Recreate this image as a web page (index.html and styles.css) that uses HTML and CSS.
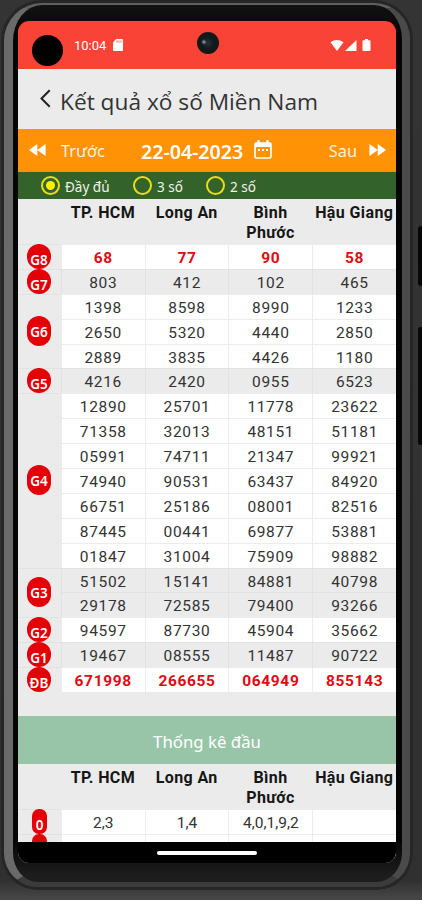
FILE: index.html
```html
<!DOCTYPE html>
<html lang="vi">
<head>
  <meta charset="UTF-8">
  <meta name="viewport" content="width=device-width, initial-scale=1.0">
  <title>Kết quả xổ số Miền Nam</title>
  <link rel="stylesheet" href="styles.css">
</head>
<body>
  <div class="phone">
    <div class="side-button power"></div>
    <div class="side-button volume"></div>
    <div class="bezel">
    <div class="screen">
      <div class="camera"></div>

      <!-- Status bar -->
      <div class="status-bar">
        <span class="hole"></span>
        <span class="clock">10:04</span>
        <svg class="sd" viewBox="0 0 10 12"><path d="M3.2 0H9a1 1 0 0 1 1 1v10a1 1 0 0 1-1 1H1a1 1 0 0 1-1-1V3.4z" fill="#fff"/><path d="M4 1.6v2M6 1.6v2M8 1.6v2" stroke="#f94337" stroke-width=".8"/></svg>
        <svg class="signals" viewBox="0 0 42 14">
          <path d="M0.5 3.2Q7 -1.2 13.5 3.2L7 12z" fill="#fff"/>
          <path d="M26.500 1V12H15z" fill="#fff"/>
          <path d="M33.500 1.200h1.500V0h3v1.200h1.500a1 1 0 0 1 1 1V11a1 1 0 0 1-1 1h-6a1 1 0 0 1-1-1V2.200a1 1 0 0 1 1-1z" fill="#fff"/>
        </svg>
      </div>

      <!-- Title -->
      <div class="title-bar">
        <svg class="back" viewBox="0 0 11 19"><path d="M9.700 1.200L1.500 9.500l8.200 8.300" fill="none" stroke="#222" stroke-width="2"/></svg>
        <h1>Kết quả xổ số Miền Nam</h1>
      </div>

      <!-- Date picker -->
      <div class="date-bar">
        <svg class="arrows" viewBox="0 0 17 12"><path d="M8.300 0v12L0 6zM16.600 0v12L8.300 6z" fill="#fff"/></svg>
        <span class="prev">Trước</span>
        <span class="date">22-04-2023</span>
        <svg class="calendar" viewBox="0 0 18 19"><path d="M4.500 0v3M13.500 0v3" stroke="#fff" stroke-width="2"/><rect x="1" y="3" width="16" height="15" rx="1.500" fill="none" stroke="#fff" stroke-width="1.700"/><path d="M1 3h16v4H1z" fill="#fff"/><path d="M4 10h10" stroke="#fff" stroke-width="1.800" stroke-dasharray="2 2"/></svg>
        <span class="next">Sau</span>
        <svg class="arrows" viewBox="0 0 17 12"><path d="M.4 0v12l8.300-6zM8.700 0v12L17 6z" fill="#fff"/></svg>
      </div>

      <!-- Display mode -->
      <div class="mode-bar">
        <label class="mode mode-full"><i class="radio checked"></i><span>Đầy đủ</span></label>
        <label class="mode mode-three"><i class="radio"></i><span>3 số</span></label>
        <label class="mode mode-two"><i class="radio"></i><span>2 số</span></label>
      </div>

      <!-- Results -->
      <div class="results">
        <div class="provinces"><b></b><b>TP. HCM</b><b>Long An</b><b>Bình<br>Phước</b><b>Hậu Giang</b></div>
        <div class="prize special">
          <div class="label"><span class="badge">G8</span></div>
          <div class="draws"><span>68</span><span>77</span><span>90</span><span>58</span></div>
        </div>
        <div class="prize shaded">
          <div class="label"><span class="badge">G7</span></div>
          <div class="draws"><span>803</span><span>412</span><span>102</span><span>465</span></div>
        </div>
        <div class="prize">
          <div class="label"><span class="badge tall">G6</span></div>
          <div class="draws">
            <span>1398</span><span>8598</span><span>8990</span><span>1233</span>
            <span>2650</span><span>5320</span><span>4440</span><span>2850</span>
            <span>2889</span><span>3835</span><span>4426</span><span>1180</span>
          </div>
        </div>
        <div class="prize shaded">
          <div class="label"><span class="badge">G5</span></div>
          <div class="draws"><span>4216</span><span>2420</span><span>0955</span><span>6523</span></div>
        </div>
        <div class="prize">
          <div class="label"><span class="badge tall">G4</span></div>
          <div class="draws">
            <span>12890</span><span>25701</span><span>11778</span><span>23622</span>
            <span>71358</span><span>32013</span><span>48151</span><span>51181</span>
            <span>05991</span><span>74711</span><span>21347</span><span>99921</span>
            <span>74940</span><span>90531</span><span>63437</span><span>84920</span>
            <span>66751</span><span>25186</span><span>08001</span><span>82516</span>
            <span>87445</span><span>00441</span><span>69877</span><span>53881</span>
            <span>01847</span><span>31004</span><span>75909</span><span>98882</span>
          </div>
        </div>
        <div class="prize shaded">
          <div class="label"><span class="badge tall">G3</span></div>
          <div class="draws">
            <span>51502</span><span>15141</span><span>84881</span><span>40798</span>
            <span>29178</span><span>72585</span><span>79400</span><span>93266</span>
          </div>
        </div>
        <div class="prize">
          <div class="label"><span class="badge">G2</span></div>
          <div class="draws"><span>94597</span><span>87730</span><span>45904</span><span>35662</span></div>
        </div>
        <div class="prize shaded">
          <div class="label"><span class="badge">G1</span></div>
          <div class="draws"><span>19467</span><span>08555</span><span>11487</span><span>90722</span></div>
        </div>
        <div class="prize special">
          <div class="label"><span class="badge">ĐB</span></div>
          <div class="draws"><span>671998</span><span>266655</span><span>064949</span><span>855143</span></div>
        </div>
      </div>

      <!-- Statistics by first digit -->
      <h2 class="stats-title">Thống kê đầu</h2>
      <div class="results stats">
        <div class="provinces"><b></b><b>TP. HCM</b><b>Long An</b><b>Bình<br>Phước</b><b>Hậu Giang</b></div>
        <div class="prize">
          <div class="label"><span class="badge digit">0</span></div>
          <div class="draws"><span>2,3</span><span>1,4</span><span>4,0,1,9,2</span><span></span></div>
        </div>
        <div class="prize">
          <div class="label"><span class="badge digit"></span></div>
          <div class="draws"><span>4</span><span>2,4,2</span><span></span><span>4</span></div>
        </div>
      </div>
      <div class="nav-bar"><span class="handle"></span></div>
    </div>
    </div>
  </div>
</body>
</html>
```
FILE: styles.css
```css
* {
  box-sizing: border-box;
}
body {
  margin: 0;
  background: #343436;
  font-family: Roboto, sans-serif;
  overflow: hidden;
}
.phone {
  position: relative;
  width: 422px;
  height: 900px;
  padding: 3px 12px 10px 4px;
  background: linear-gradient(#343434 0, #303030 880px, #454547 898px);
}
.bezel {
  height: 884px;
  padding: 16px 6px 0 5px;
  border-radius: 38px 36px 34px 34px;
  border-style: solid;
  border-width: 2px 8px 5px 9px;
  border-color: #606060 #4a4a4a #3b3b3b #6a6a6a;
  background: linear-gradient(#121212 0, #050505 30px, #050505 835px, #1d1d1d 870px);
  box-shadow: 0 0 0 3px #262626;
}
.side-button {
  position: absolute;
  right: 0;
  width: 4px;
  background: #080808;
  border-radius: 3px 0 0 3px;
}
.power {
  top: 226px;
  height: 60px;
}
.volume {
  top: 327px;
  height: 118px;
}
.screen {
  position: relative;
  display: flex;
  flex-direction: column;
  width: 378px;
  height: 842px;
  overflow: hidden;
  border-radius: 11px;
  background: #000;
}
.camera {
  position: absolute;
  left: 179px;
  top: 11px;
  width: 22px;
  height: 22px;
  border-radius: 50%;
  background: radial-gradient(circle at 7px 10px, #a5b5b8 0, #333f43 2px, transparent 3px), radial-gradient(circle at 11px 11px, #263238 0, #101a1d 6px, #11181a 11px);
}
.status-bar {
  display: flex;
  align-items: center;
  flex: none;
  height: 48px;
  padding-left: 14px;
  background: #f94337;
  color: #fff;
}
.hole {
  width: 31px;
  height: 31px;
  margin-top: 11px;
  border-radius: 50%;
  background: #000;
}
.clock {
  margin-left: 11px;
  font-size: 13px;
}
.sd {
  width: 10px;
  height: 12px;
  margin-left: 7px;
}
.signals {
  width: 42px;
  height: 14px;
  margin: 1px 24px 0 auto;
}
.title-bar {
  display: flex;
  align-items: center;
  flex: none;
  height: 60px;
  padding-left: 22px;
  background: #ebebeb;
}
.back {
  width: 11px;
  height: 19px;
  margin-bottom: 1px;
}
.title-bar h1 {
  margin: 5px 0 0 9px;
  font: 400 22.700px "Open Sans", sans-serif;
  color: #333;
  white-space: nowrap;
}
.date-bar {
  display: flex;
  align-items: center;
  flex: none;
  height: 43px;
  padding: 0 10px 0 11px;
  background: #ff9205;
  color: #fff;
  font-family: "Noto Sans", sans-serif;
}
.arrows {
  width: 17px;
  height: 12px;
  margin-bottom: 1px;
}
.prev,
.next {
  margin-top: 1px;
  font-size: 16.300px;
  color: #fff3df;
}
.prev {
  width: 80px;
  margin-left: 15px;
}
.date {
  width: 103px;
  margin-top: 2px;
  font-size: 19.600px;
  font-weight: 600;
  white-space: nowrap;
}
.calendar {
  width: 18px;
  height: 19px;
  margin: 0 0 3px 10px;
}
.next {
  margin-left: auto;
  margin-right: 12px;
}
.mode-bar {
  display: flex;
  flex: none;
  height: 27px;
  background: #33632a;
}
.mode {
  display: flex;
  align-items: center;
  color: #f0f3ea;
  font: 13.500px "Noto Sans", sans-serif;
}
.mode-full {
  width: 115px;
  padding-left: 23px;
}
.mode-three {
  width: 73px;
}
.radio {
  width: 19px;
  height: 19px;
  margin-right: 5px;
  padding: 3px;
  border: 2px solid #e8de13;
  border-radius: 50%;
}
.checked::before {
  content: "";
  display: block;
  width: 9px;
  height: 9px;
  border-radius: 50%;
  background: #ffee00;
}
.mode span {
  margin-top: 2px;
}
.results {
  flex: none;
  padding-bottom: 24px;
  background: #ebebeb;
  color: #333;
  font-size: 15.500px;
}
.provinces {
  display: grid;
  grid-template-columns: 43px repeat(4, 83.800px);
  height: 45px;
  padding-top: 4px;
  font-size: 16px;
  line-height: 19.500px;
  text-align: center;
  white-space: nowrap;
  color: #161616;
  letter-spacing: 0.400px;
}
.prize {
  display: flex;
}
.label {
  display: flex;
  align-items: center;
  width: 43px;
  padding-left: 9px;
  box-shadow: inset 0 1px #e2e2e2;
}
.badge {
  width: 24px;
  height: 24.900px;
  padding-top: 4px;
  overflow: hidden;
  border-radius: 12px;
  background: #e30007;
  color: #fff;
  font: 600 13.500px/25px "Noto Sans", sans-serif;
  text-align: center;
}
.tall {
  height: 30px;
  padding-top: 4px;
}
.draws {
  display: grid;
  grid-template-columns: repeat(4, 83.800px);
  grid-auto-rows: 24.900px;
  background: #fff;
}
.draws span {
  border: solid #ececec;
  border-width: 1px 0 0 1px;
  line-height: 26.500px;
  text-align: center;
  letter-spacing: 0.650px;
}
.shaded .draws {
  background: #ebebeb;
}
.shaded .draws span {
  border-color: #e2e2e2;
}
.special .draws {
  color: #df0b13;
  font-weight: bold;
}
.stats-title {
  flex: none;
  height: 48px;
  margin: 0;
  background: #98c5a8;
  color: #fff;
  font: 16.800px/52px "Noto Sans", sans-serif;
  text-align: center;
}
.digit {
  width: 15px;
  margin-left: 5px;
  border-radius: 7px;
}
.stats .draws span {
  letter-spacing: 0;
}
.nav-bar {
  position: absolute;
  left: 0;
  right: 0;
  bottom: 0;
  height: 21px;
  padding-top: 9px;
  background: #000;
}
.handle {
  display: block;
  width: 100px;
  height: 4px;
  margin: 0 auto;
  border-radius: 2px;
  background: #fff;
}
```
